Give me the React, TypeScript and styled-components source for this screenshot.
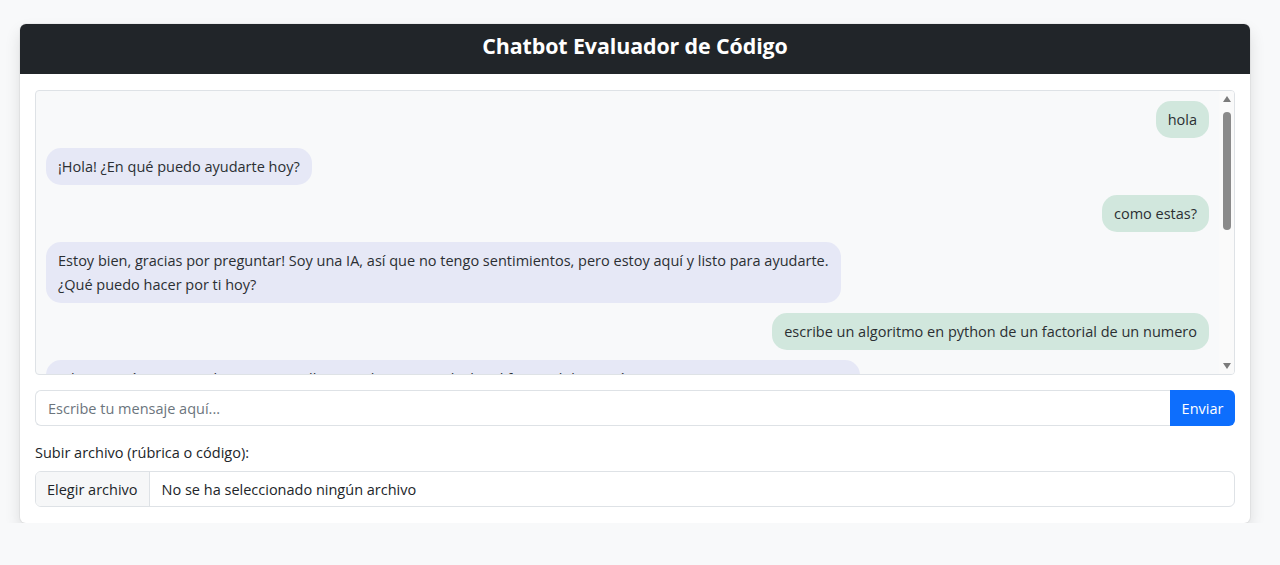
import React from "react";
import styled, { createGlobalStyle } from "styled-components";

const GlobalStyle = createGlobalStyle`
  html, body {
    margin: 0;
    padding: 0;
    background: #f8f9fa;
    font-family: "Open Sans", "Noto Sans", "Liberation Sans", sans-serif;
    color: #212529;
  }
  * { box-sizing: border-box; }
`;

const Page = styled.div`
  padding: 24px 30px 0 20px;
`;

const Card = styled.div`
  background: #ffffff;
  border-radius: 6px;
  box-shadow: 0 8px 16px rgba(0, 0, 0, 0.12), 0 0 0 1px rgba(0, 0, 0, 0.04);
  overflow: hidden;
`;

const Header = styled.div`
  height: 50px;
  padding-bottom: 7px;
  background: #212529;
  display: flex;
  align-items: center;
  justify-content: center;
`;

const Title = styled.h1`
  margin: 0;
  color: #ffffff;
  font-size: 21.4px;
  font-weight: 700;
  letter-spacing: -0.1px;
`;

const Body = styled.div`
  padding: 16px 15px 16px 15px;
  display: flex;
  flex-direction: column;
`;

const ChatBox = styled.div`
  height: 285px;
  border: 1px solid #dee2e6;
  border-radius: 4px;
  background: #f8f9fa;
  display: flex;
  overflow: hidden;
`;

const MessageList = styled.div`
  flex: 1;
  min-width: 0;
  padding: 10px;
  overflow: hidden;
  display: flex;
  flex-direction: column;
  gap: 10px;
`;

const ScrollRail = styled.div`
  width: 15px;
  flex-shrink: 0;
  background: #fafafa;
  display: flex;
  flex-direction: column;
`;

const ArrowButton = styled.div<{ $down?: boolean }>`
  height: 15px;
  display: flex;
  align-items: center;
  justify-content: center;
  &::before {
    content: "";
    width: 0;
    height: 0;
    border-left: 4.5px solid transparent;
    border-right: 4.5px solid transparent;
    ${(p) =>
      p.$down
        ? "border-top: 6px solid #7b7b7b; margin-bottom: 2px;"
        : "border-bottom: 6px solid #7b7b7b; margin-top: 0px;"}
  }
`;

const Track = styled.div`
  flex: 1;
  display: flex;
  justify-content: center;
  padding-top: 6px;
`;

const Thumb = styled.div`
  width: 8px;
  height: 118px;
  border-radius: 4px;
  background: #8a8a8a;
`;

const Row = styled.div<{ $user?: boolean }>`
  display: flex;
  justify-content: ${(p) => (p.$user ? "flex-end" : "flex-start")};
  flex-shrink: 0;
`;

const Bubble = styled.div<{ $user?: boolean }>`
  max-width: 70%;
  padding: 6.5px 12px;
  border-radius: 15px;
  font-size: 14.5px;
  line-height: 24px;
  color: #2b2f33;
  background: ${(p) => (p.$user ? "#d1e7dd" : "#e6e8f6")};
  white-space: pre-wrap;
`;

const InputGroup = styled.div`
  margin-top: 15px;
  display: flex;
  height: 36px;
`;

const TextInput = styled.input`
  flex: 1;
  min-width: 0;
  border: 1px solid #dee2e6;
  border-right: none;
  border-radius: 6px 0 0 6px;
  padding: 6px 12px;
  font-family: inherit;
  font-size: 14.5px;
  color: #212529;
  background: #fff;
  outline: none;
  &::placeholder {
    color: #6c757d;
  }
`;

const SendButton = styled.button`
  width: 65px;
  border: none;
  border-radius: 0 6px 6px 0;
  background: #0d6efd;
  color: #ffffff;
  font-family: inherit;
  font-size: 14.5px;
  padding: 0 10px;
  cursor: pointer;
`;

const FieldLabel = styled.label`
  display: block;
  margin-top: 16px;
  margin-bottom: 7px;
  font-size: 14.5px;
  line-height: 22px;
  color: #212529;
`;

const FileField = styled.label`
  display: flex;
  align-items: stretch;
  height: 36px;
  border: 1px solid #dee2e6;
  border-radius: 6px;
  overflow: hidden;
  font-size: 14.5px;
  cursor: pointer;
`;

const FileButton = styled.span`
  display: flex;
  align-items: center;
  padding: 0 11px;
  background: #f6f7f8;
  border-right: 1px solid #dee2e6;
  color: #212529;
`;

const FileName = styled.span`
  display: flex;
  align-items: center;
  padding: 0 12px;
  color: #212529;
`;

const HiddenFile = styled.input`
  display: none;
`;

type Msg = { user?: boolean; text: string };

const messages: Msg[] = [
  { user: true, text: "hola" },
  { text: "¡Hola! ¿En qué puedo ayudarte hoy?" },
  { user: true, text: "como estas?" },
  {
    text:
      "Estoy bien, gracias por preguntar! Soy una IA, así que no tengo sentimientos, pero estoy aquí y listo para ayudarte.\n¿Qué puedo hacer por ti hoy?",
  },
  { user: true, text: "escribe un algoritmo en python de un factorial de un numero" },
  {
    text:
      "¡Claro! Aquí tienes un algoritmo sencillo en Python para calcular el factorial de un número entero no negativo utilizando un ciclo for:\n\ndef factorial(n):\n    if n < 0:\n        return None\n    resultado = 1\n    for i in range(1, n + 1):\n        resultado *= i\n    return resultado\n\nnumero = int(input(\"Ingresa un número: \"))\nprint(\"El factorial es:\", factorial(numero))",
  },
];

export default function App() {
  return (
    <>
      <GlobalStyle />
      <Page>
        <Card>
          <Header>
            <Title>Chatbot Evaluador de Código</Title>
          </Header>
          <Body>
            <ChatBox>
              <MessageList>
                {messages.map((m, i) => (
                  <Row key={i} $user={m.user}>
                    <Bubble $user={m.user}>{m.text}</Bubble>
                  </Row>
                ))}
              </MessageList>
              <ScrollRail>
                <ArrowButton />
                <Track>
                  <Thumb />
                </Track>
                <ArrowButton $down />
              </ScrollRail>
            </ChatBox>
            <InputGroup>
              <TextInput placeholder="Escribe tu mensaje aquí..." />
              <SendButton>Enviar</SendButton>
            </InputGroup>
            <FieldLabel htmlFor="archivo">Subir archivo (rúbrica o código):</FieldLabel>
            <FileField>
              <HiddenFile id="archivo" type="file" />
              <FileButton>Elegir archivo</FileButton>
              <FileName>No se ha seleccionado ningún archivo</FileName>
            </FileField>
          </Body>
        </Card>
      </Page>
    </>
  );
}
